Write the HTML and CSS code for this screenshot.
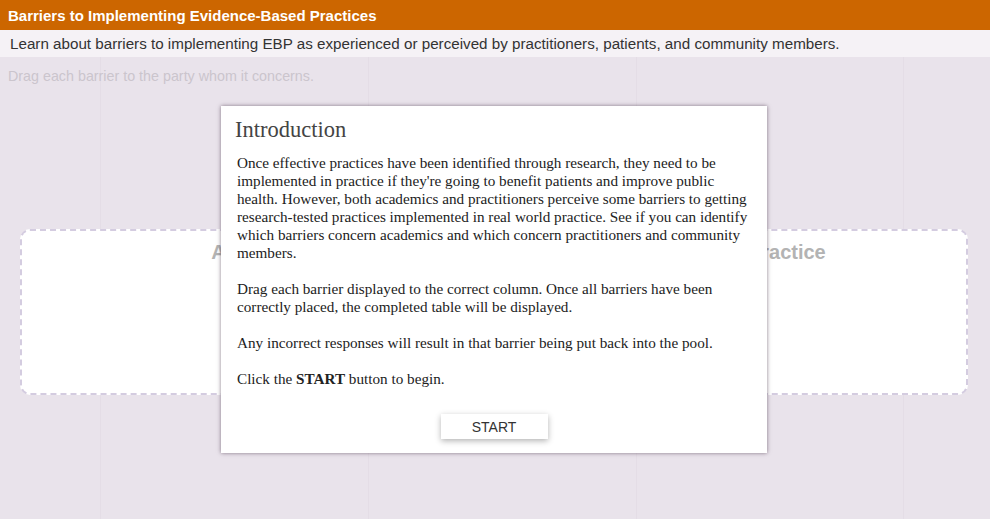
FILE: index.html
```html
<!DOCTYPE html>
<html>
<head>
<meta charset="utf-8">
<link rel="stylesheet" href="styles.css">
</head>
<body>
<div class="app">
  <header class="titlebar">Barriers to Implementing Evidence-Based Practices</header>
  <div class="subtitle">Learn about barriers to implementing EBP as experienced or perceived by practitioners, patients, and community members.</div>
  <main class="stage">
    <p class="instr">Drag each barrier to the party whom it concerns.</p>
    <div class="board">
      <div class="col"><h2>Academics</h2></div>
      <div class="col"><h2>Real World Practice</h2></div>
    </div>
  </main>
  <div class="modal">
    <h1>Introduction</h1>
    <p>Once effective practices have been identified through research, they need to be implemented in practice if they're going to benefit patients and improve public health. However, both academics and practitioners perceive some barriers to getting research-tested practices implemented in real world practice. See if you can identify which barriers concern academics and which concern practitioners and community members.</p>
    <p>Drag each barrier displayed to the correct column. Once all barriers have been correctly placed, the completed table will be displayed.</p>
    <p>Any incorrect responses will result in that barrier being put back into the pool.</p>
    <p>Click the <b>START</b> button to begin.</p>
    <div class="actions"><button class="start">START</button></div>
  </div>
</div>
</body>
</html>
```
FILE: styles.css
```css
* { box-sizing: border-box; }
html, body { margin: 0; padding: 0; }
body {
  width: 990px;
  height: 519px;
  overflow: hidden;
  background-color: #e9e3eb;
  background-image: linear-gradient(90deg, transparent 100px, #e4dde6 100px, #e4dde6 101px, transparent 101px, transparent 368px, #e4dde6 368px, #e4dde6 369px, transparent 369px, transparent 636px, #e4dde6 636px, #e4dde6 637px, transparent 637px, transparent 903px, #e4dde6 903px, #e4dde6 904px, transparent 904px);
  font-family: "Liberation Sans", Arial, sans-serif;
}
.app { position: relative; height: 519px; }
.titlebar {
  height: 30px;
  background: #cc6600;
  color: #fff;
  font-weight: bold;
  font-size: 15px;
  line-height: 31px;
  padding-left: 8px;
}
.subtitle {
  height: 27px;
  background: #f5f2f6;
  color: #333;
  font-size: 15.2px;
  line-height: 27px;
  padding-left: 10px;
}
.stage { padding: 0 20px; }
.instr {
  margin: 0 0 0 -12px;
  padding-top: 0;
  color: #cbc5cd;
  font-size: 14.3px;
  line-height: 38px;
}
.board {
  margin-top: 134px;
  width: 948px;
  height: 166px;
  background: #fff;
  border: 2px dashed #d4cce0;
  border-radius: 10px;
  display: grid;
  grid-template-columns: 1fr 1fr;
  padding-left: 8px;
}
.col h2 {
  margin: 10px 0 0;
  text-align: center;
  font-size: 20px;
  font-weight: bold;
  color: #b3b3b3;
}
.modal {
  position: absolute;
  left: 221px;
  top: 106px;
  width: 546px;
  height: 347px;
  background: #fff;
  box-shadow: 0 0 4px rgba(60,40,60,0.6);
  padding: 12px 12px 0 16px;
  font-family: "Liberation Serif", "Times New Roman", serif;
  color: #222;
}
.modal h1 {
  margin: 0 0 12px -2px;
  font-weight: normal;
  font-size: 22.5px;
  line-height: 24px;
  color: #444;
}
.modal p {
  margin: 0 0 18px;
  font-size: 15.2px;
  line-height: 18px;
  width: 518px;
}
.actions { display: flex; justify-content: center; margin-top: 26px; }
.start {
  width: 107px;
  height: 25px;
  background: #fff;
  border: none;
  box-shadow: 0 2px 6px rgba(0,0,0,0.3);
  font-family: "Liberation Sans", Arial, sans-serif;
  font-size: 14px;
  color: #333;
  padding: 0;
  margin-left: -4px;
}
```
